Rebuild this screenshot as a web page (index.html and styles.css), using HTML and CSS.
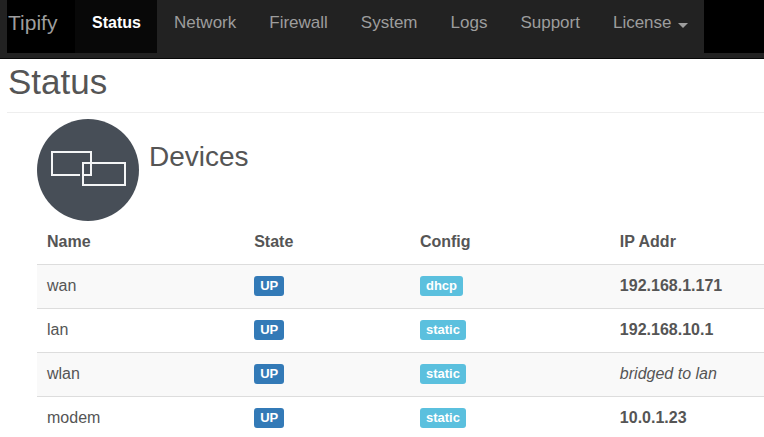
FILE: index.html
```html
<!DOCTYPE html>
<html lang="en">
<head>
    <meta charset="UTF-8">
    <meta name="viewport" content="width=device-width, initial-scale=1.0">
    <title>Tipify - Status</title>
    <link rel="stylesheet" href="styles.css">
</head>
<body>
    <header class="topbar">
        <nav class="navbar">
            <a href="#" class="brand">Tipify</a>
            <ul class="menu">
                <li><a href="#" class="active">Status</a></li>
                <li><a href="#">Network</a></li>
                <li><a href="#">Firewall</a></li>
                <li><a href="#">System</a></li>
                <li><a href="#">Logs</a></li>
                <li><a href="#">Support</a></li>
                <li><a href="#">License <span class="caret"></span></a></li>
            </ul>
        </nav>
    </header>

    <main class="content">
        <h1>Status</h1>

        <section class="devices">
            <div class="section-head">
                <svg class="section-icon" viewBox="0 0 102 102" aria-hidden="true">
                    <circle cx="51" cy="51" r="51" fill="#474e57"/>
                    <g fill="none" stroke="#f4f5f6" stroke-width="2">
                        <path d="M43 56H15V33H54V56H46"/>
                        <rect x="46" y="44" width="42" height="22"/>
                    </g>
                </svg>
                <h2>Devices</h2>
            </div>

            <table class="device-table">
                <thead>
                    <tr>
                        <th class="col-name">Name</th>
                        <th class="col-state">State</th>
                        <th class="col-config">Config</th>
                        <th>IP Addr</th>
                    </tr>
                </thead>
                <tbody>
                    <tr>
                        <td>wan</td>
                        <td><span class="label up">UP</span></td>
                        <td><span class="label info">dhcp</span></td>
                        <td><strong>192.168.1.171</strong></td>
                    </tr>
                    <tr>
                        <td>lan</td>
                        <td><span class="label up">UP</span></td>
                        <td><span class="label info">static</span></td>
                        <td><strong>192.168.10.1</strong></td>
                    </tr>
                    <tr>
                        <td>wlan</td>
                        <td><span class="label up">UP</span></td>
                        <td><span class="label info">static</span></td>
                        <td><em>bridged to lan</em></td>
                    </tr>
                    <tr>
                        <td>modem</td>
                        <td><span class="label up">UP</span></td>
                        <td><span class="label info">static</span></td>
                        <td><strong>10.0.1.23</strong></td>
                    </tr>
                </tbody>
            </table>
        </section>
    </main>
</body>
</html>
```
FILE: styles.css
```css
/* General */
body {
    margin: 0;
    font-family: "Liberation Sans", Arial, sans-serif;
    font-size: 16px;
    color: #555;
    background: #fff;
    overflow-x: hidden;
}

/* Top navigation */
.topbar {
    background: #222;
    padding: 0 0 5px 7px;
    border-bottom: 1px solid #080808;
}

.navbar {
    display: flex;
    background: #000;
}

.brand {
    width: 68px;
    padding-left: 1px;
    box-sizing: border-box;
    font-size: 21px;
    line-height: 46px;
    color: #9d9d9d;
    text-decoration: none;
}

.menu {
    display: flex;
    margin: 0;
    padding: 0;
    list-style: none;
    background: #222;
}

.menu a {
    display: block;
    height: 53px;
    padding: 0 16px 0 17px;
    font-size: 17px;
    line-height: 46px;
    color: #9d9d9d;
    text-decoration: none;
}

.menu .active {
    font-size: 16px;
    font-weight: bold;
    color: #fff;
    background: #080808;
}

.caret {
    display: inline-block;
    margin-left: 2px;
    vertical-align: baseline;
    border-top: 5px solid #9d9d9d;
    border-left: 5px solid transparent;
    border-right: 5px solid transparent;
}

/* Page content */
.content {
    padding-left: 7px;
}

h1 {
    margin: 0 0 6px;
    padding: 0 0 7px 1px;
    font-size: 35px;
    font-weight: normal;
    line-height: 46px;
    border-bottom: 1px solid #eee;
}

.devices {
    padding-left: 30px;
}

.section-head {
    display: flex;
    gap: 10px;
}

.section-icon {
    width: 102px;
    height: 102px;
}

h2 {
    margin: 20px 0 0;
    font-size: 28px;
    font-weight: normal;
    line-height: 36px;
}

/* Device list */
.device-table {
    width: 100%;
    table-layout: fixed;
    border-collapse: collapse;
}

.device-table th,
.device-table td {
    box-sizing: border-box;
    height: 44px;
    padding: 0 9px 0 10px;
    text-align: left;
}

.device-table th {
    height: 43px;
}

.device-table td {
    border-top: 1px solid #ddd;
}

.device-table tbody tr:nth-child(odd) {
    background: #f9f9f9;
}

.col-name {
    width: 28.5%;
}

.col-state {
    width: 22.8%;
}

.col-config {
    width: 27.5%;
}

.label {
    display: inline-block;
    padding: 0 6px;
    font-size: 13px;
    font-weight: bold;
    line-height: 20px;
    color: #fff;
    border-radius: 3px;
}

.up {
    background: #337ab7;
}

.info {
    background: #5bc0de;
}
```
